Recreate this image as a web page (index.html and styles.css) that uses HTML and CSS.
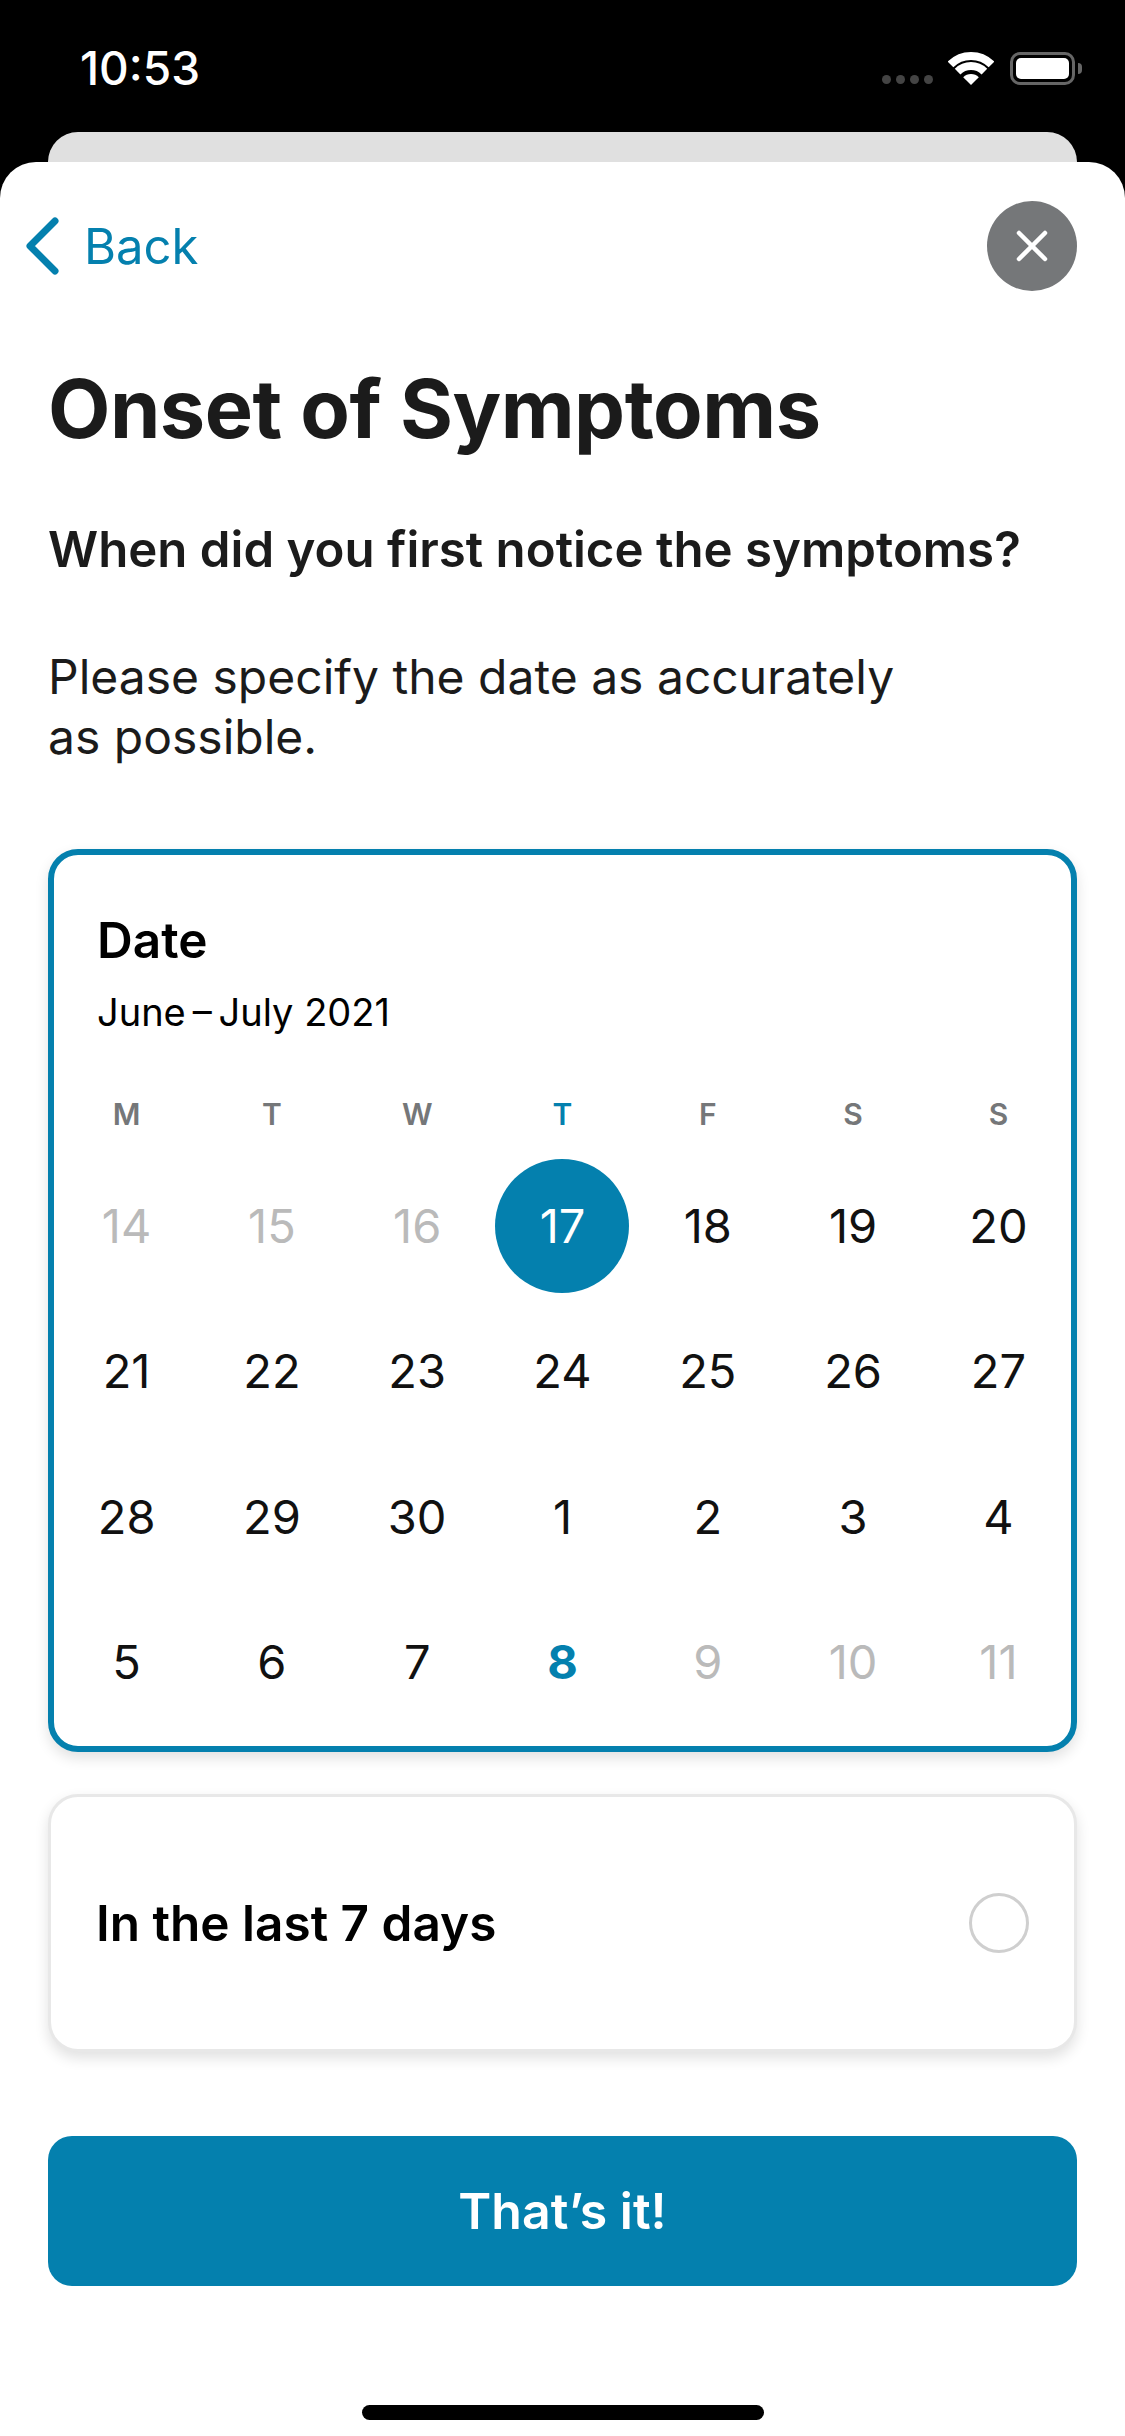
FILE: index.html
```html
<!DOCTYPE html>
<html lang="en">
<head>
<meta charset="utf-8">
<title>Onset of Symptoms</title>
<link rel="stylesheet" href="styles.css">
</head>
<body>
<div class="status">
  <span class="time">10:53</span>
  <div class="status-icons">
    <span class="dots"><i></i><i></i><i></i><i></i></span>
    <svg class="wifi" width="46" height="33" viewBox="0 0 46 33"><path d="M2.500 12.500a29 29 0 0 1 41 0M9.600 19.600a19 19 0 0 1 26.800 0" fill="none" stroke="#fff" stroke-width="8"/><path d="M23 33l-7.800-7.800a11 11 0 0 1 15.600 0z" fill="#fff"/></svg>
    <span class="battery"><span class="battery-fill"></span></span>
  </div>
</div>
<div class="back-sheet"></div>
<main class="sheet">
  <div class="nav">
    <a class="back">
      <svg width="34" height="58" viewBox="0 0 34 58"><path d="M30 4 5 29l25 25" fill="none" stroke="#0480ae" stroke-width="7" stroke-linecap="round" stroke-linejoin="round"/></svg>
      <span>Back</span>
    </a>
    <button class="close" aria-label="Close">
      <svg width="32" height="32" viewBox="0 0 32 32"><path d="M3 3l26 26M29 3 3 29" stroke="#fff" stroke-width="4.500" stroke-linecap="round"/></svg>
    </button>
  </div>
  <div class="content">
    <h1>Onset of Symptoms</h1>
    <p class="question">When did you first notice the symptoms?</p>
    <p class="hint">Please specify the date as accurately<br>as possible.</p>
    <section class="card calendar">
      <h2>Date</h2>
      <div class="range">June&#8201;–&#8201;July 2021</div>
      <div class="grid">
        <span class="dow">M</span><span class="dow">T</span><span class="dow">W</span><span class="dow now">T</span><span class="dow">F</span><span class="dow">S</span><span class="dow">S</span>
        <span class="day off">14</span><span class="day off">15</span><span class="day off">16</span><span class="day sel">17</span><span class="day">18</span><span class="day">19</span><span class="day">20</span>
        <span class="day">21</span><span class="day">22</span><span class="day">23</span><span class="day">24</span><span class="day">25</span><span class="day">26</span><span class="day">27</span>
        <span class="day">28</span><span class="day">29</span><span class="day">30</span><span class="day">1</span><span class="day">2</span><span class="day">3</span><span class="day">4</span>
        <span class="day">5</span><span class="day">6</span><span class="day">7</span><span class="day today">8</span><span class="day off">9</span><span class="day off">10</span><span class="day off">11</span>
      </div>
    </section>
    <section class="card option">
      <span>In the last 7 days</span>
      <i class="radio"></i>
    </section>
    <button class="cta">That’s it!</button>
  </div>
  <div class="home"></div>
</main>
</body>
</html>
```
FILE: styles.css
```css
* { box-sizing: border-box; }
html, body { margin: 0; padding: 0; }
body {
  width: 1125px;
  height: 2436px;
  background: #000;
  font-family: Inter, "Liberation Sans", sans-serif;
  overflow: hidden;
  display: flex;
  flex-direction: column;
}
.status {
  height: 132px;
  flex: none;
  display: flex;
  justify-content: space-between;
  padding: 46px 43px 0 80px;
}
.time {
  color: #fff;
  font-size: 46px;
  font-weight: 500;
  line-height: 44px;
  height: 44px;
}
.status-icons { display: flex; align-items: flex-start; padding-top: 6px; height: 44px; }
.dots { display: flex; gap: 5px; margin: 23px 15px 0 0; }
.dots i { width: 9px; height: 9px; border-radius: 50%; background: #444; }
.wifi { margin-right: 16px; }
.battery {
  width: 65px; height: 33px;
  border: 3px solid #666;
  border-radius: 10px;
  padding: 3px;
  margin-right: 7px;
  position: relative;
}
.battery::after {
  content: "";
  position: absolute;
  right: -10px; top: 8px;
  width: 4px; height: 11px;
  background: #666;
  border-radius: 0 4px 4px 0;
}
.battery-fill { display: block; height: 100%; background: #fff; border-radius: 5px; }
.back-sheet {
  flex: none;
  height: 30px;
  margin: 0 48px;
  background: #e0e0e0;
  border-radius: 30px 30px 0 0;
}
.sheet {
  flex: 1;
  background: #fff;
  border-radius: 36px 36px 0 0;
  display: flex;
  flex-direction: column;
  position: relative;
}
.nav {
  height: 130px;
  padding: 39px 48px 0 25px;
  display: flex;
  justify-content: space-between;
  align-items: flex-start;
}
.back {
  display: flex;
  align-items: center;
  gap: 25px;
  color: #0480ae;
  font-size: 49px;
  height: 90px;
}
.close {
  width: 90px; height: 90px;
  border: 0; padding: 0;
  border-radius: 50%;
  background: #757779;
  display: flex; align-items: center; justify-content: center;
}
.content { padding: 0 48px; }
h1 {
  margin: 72px 0 0;
  font-size: 81px;
  font-weight: 700;
  line-height: 90px;
  color: #1b1b1b;
  letter-spacing: -0.5px;
}
.question {
  margin: 65px 0 0;
  font-size: 49.200px;
  font-weight: 600;
  line-height: 60px;
  color: #1b1b1b;
}
.hint {
  margin: 68px 0 0;
  font-size: 48px;
  line-height: 60px;
  color: #1b1b1b;
}
.card {
  background: #fff;
  border-radius: 30px;
  box-shadow: 0 6px 14px rgba(0,0,0,.12);
}
.calendar {
  margin-top: 82px;
  height: 903px;
  border: 6px solid #0480ae;
  padding: 57px 0 0 43px;
}
h2 {
  margin: 0;
  font-size: 49.500px;
  font-weight: 600;
  line-height: 56px;
  color: #000;
}
.range {
  margin-top: 19px;
  font-size: 38px;
  line-height: 50px;
  color: #000;
}
.grid {
  margin: 52px 0 0 -44.500px;
  width: 1020px;
  display: grid;
  grid-template-columns: repeat(7, 145.300px);
  grid-template-rows: 64px repeat(4, 145.300px);
  justify-content: center;
}
.dow {
  display: flex; justify-content: center;
  line-height: 50px;
  font-size: 30px;
  font-weight: 600;
  color: #757779;
}
.dow.now { color: #0480ae; }
.day {
  display: flex; align-items: center; justify-content: center;
  font-size: 47px;
  color: #111;
}
.day.off { color: #bababa; }
.day.today { color: #0480ae; font-weight: 700; }
.day.sel {
  background: #0480ae;
  color: #fff;
  border-radius: 50%;
  width: 134px; height: 134px;
  justify-self: center; align-self: center;
}
.option {
  margin-top: 42px;
  height: 258px;
  border: 3px solid #e8e8e8;
  padding: 0 45px;
  display: flex; align-items: center; justify-content: space-between;
  font-size: 49.500px;
  font-weight: 600;
  color: #000;
}
.radio {
  width: 60px; height: 60px;
  border: 3px solid #cfcfcf;
  border-radius: 50%;
}
.cta {
  display: block;
  margin-top: 84px;
  width: 100%;
  height: 150px;
  background: #0480ae;
  border: 0;
  border-radius: 24px;
  color: #fff;
  font-family: inherit;
  font-size: 50px;
  font-weight: 600;
}
.home {
  position: absolute;
  left: 362px; bottom: 16px;
  width: 402px; height: 15px;
  background: #000;
  border-radius: 8px;
}
```
